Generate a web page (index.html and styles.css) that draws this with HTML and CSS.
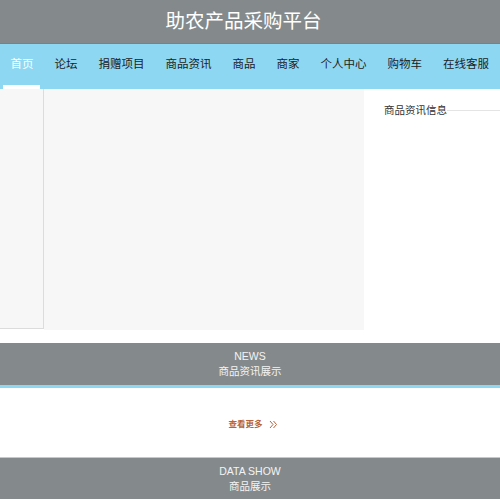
FILE: index.html
```html
<!DOCTYPE html>
<html lang="zh-CN">
<head>
<meta charset="utf-8">
<title>助农产品采购平台</title>
<link rel="stylesheet" href="styles.css">
</head>
<body>
<header class="top">
  <h1 class="title">助农产品采购平台</h1>
</header>
<nav class="nav">
  <a class="nav-item active">首页</a>
  <a class="nav-item">论坛</a>
  <a class="nav-item">捐赠项目</a>
  <a class="nav-item">商品资讯</a>
  <a class="nav-item">商品</a>
  <a class="nav-item">商家</a>
  <a class="nav-item">个人中心</a>
  <a class="nav-item">购物车</a>
  <a class="nav-item">在线客服</a>
</nav>
<main class="hero">
  <aside class="side"></aside>
  <section class="banner"></section>
  <section class="info">
    <div class="info-head">
      <span class="info-title">商品资讯信息</span>
      <span class="info-line"></span>
    </div>
  </section>
</main>
<section class="band band-news">
  <div class="band-en">NEWS</div>
  <div class="band-cn">商品资讯展示</div>
</section>
<section class="more-area">
  <a class="more">查看更多<svg class="more-icon" width="9" height="9" viewBox="0 0 9 9"><path d="M1 1 L4 4.5 L1 8 M4.5 1 L7.5 4.5 L4.5 8" fill="none" stroke="#b5643c" stroke-width="1"/></svg></a>
</section>
<section class="band band-data">
  <div class="band-en">DATA SHOW</div>
  <div class="band-cn">商品展示</div>
</section>
</body>
</html>
```
FILE: styles.css
```css
* { box-sizing: border-box; }
html, body { margin: 0; padding: 0; }
body {
  font-family: "Liberation Sans", "Noto Sans CJK SC", sans-serif;
  background: #ffffff;
  color: #333;
  width: 500px;
  overflow: hidden;
}
.top {
  height: 44px;
  background: #848a8c;
  border-bottom: 1px solid #7a8183;
  box-shadow: 0 1px 1px rgba(0,0,0,0.08);
}
.title {
  margin: 0;
  padding-right: 13px;
  font-size: 19.5px;
  font-weight: normal;
  color: #ffffff;
  text-align: center;
  line-height: 43px;
}
.nav {
  display: flex;
  height: 45px;
  background: #8ed7f2;
  white-space: nowrap;
}
.nav-item {
  position: relative;
  flex: none;
  padding: 0 10.5px;
  font-size: 11.5px;
  line-height: 40px;
  color: #222;
}
.nav-item.active { color: #ffffff; }
.nav-item.active::after {
  content: "";
  position: absolute;
  left: 3px;
  right: 4px;
  bottom: 0;
  height: 4px;
  background: #ffffff;
}
.hero {
  display: flex;
  align-items: flex-start;
  height: 241px;
}
.side {
  width: 44px;
  height: 240px;
  background: #f7f7f7;
  border-right: 1px solid #dcdcdc;
  border-bottom: 1px solid #dcdcdc;
}
.banner {
  width: 320px;
  height: 241px;
  background: #f7f7f7;
}
.info {
  flex: 1;
  padding: 14px 0 0 20px;
}
.info-head {
  display: flex;
  align-items: center;
}
.info-title {
  font-size: 10.5px;
  line-height: 14px;
  color: #333;
}
.info-line {
  flex: 1;
  height: 1px;
  margin-top: 1px;
  background: #e4e4e4;
}
.band {
  background: #848a8c;
  color: #f4f4f4;
  text-align: center;
  font-size: 10.5px;
  line-height: 15px;
}
.band-news {
  margin-top: 13px;
  height: 45px;
  padding-top: 6px;
  border-bottom: 3px solid #8ed7f2;
}
.band-data {
  height: 42px;
  padding-top: 6px;
  border-top: 1px solid #c8c8c8;
}
.more-area {
  height: 69px;
  padding-top: 30px;
  display: flex;
  justify-content: center;
  align-items: flex-start;
}
.more {
  display: flex;
  align-items: center;
  gap: 6px;
  font-size: 8.5px;
  font-weight: bold;
  line-height: 12px;
  color: #b5643c;
  margin-left: 6px;
}
.more-icon { display: block; }
```
